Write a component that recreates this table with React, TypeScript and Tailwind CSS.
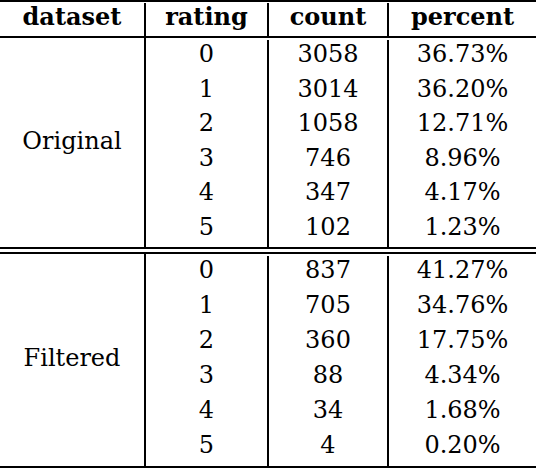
import React from "react";

const groups = [
  {
    name: "Original",
    rows: [
      ["0", "3058", "36.73%"],
      ["1", "3014", "36.20%"],
      ["2", "1058", "12.71%"],
      ["3", "746", "8.96%"],
      ["4", "347", "4.17%"],
      ["5", "102", "1.23%"],
    ],
  },
  {
    name: "Filtered",
    rows: [
      ["0", "837", "41.27%"],
      ["1", "705", "34.76%"],
      ["2", "360", "17.75%"],
      ["3", "88", "4.34%"],
      ["4", "34", "1.68%"],
      ["5", "4", "0.20%"],
    ],
  },
];

const VLine = () => <div className="w-[2px] self-stretch bg-black" />;

const Row = ({ cells }: { cells: string[] }) => (
  <div className="flex flex-1 leading-[28px]">
    <div className="w-[121px] text-center">{cells[0]}</div>
    <VLine />
    <div className="w-[118px] text-center">{cells[1]}</div>
    <VLine />
    <div className="flex-1 text-center">{cells[2]}</div>
  </div>
);

const Group = ({ name, rows, h }: { name: string; rows: string[][]; h: string }) => (
  <div className={`flex ${h}`}>
    <div className="w-[144px] flex items-center justify-center pb-[4px] leading-[28px]">{name}</div>
    <VLine />
    <div className="flex-1 flex flex-col pt-[2px]">
      {rows.map((r) => (
        <Row key={r[0]} cells={r} />
      ))}
    </div>
  </div>
);

export default function App() {
  return (
    <div className="w-[536px] h-[468px] bg-white text-black flex flex-col overflow-hidden font-['DejaVu_Serif',serif] text-[24px]">
      <div className="h-[2px] bg-black" />
      <div className="flex h-[34px] font-bold leading-[28px] pt-[1px]">
        <div className="w-[144px] text-center">dataset</div>
        <VLine />
        <div className="w-[121px] text-center">rating</div>
        <VLine />
        <div className="w-[118px] text-center">count</div>
        <VLine />
        <div className="flex-1 text-center">percent</div>
      </div>
      <div className="h-[2px] bg-black" />
      <Group name={groups[0].name} rows={groups[0].rows} h="h-[209px]" />
      <div className="h-[2px] bg-black" />
      <div className="h-[3px]" />
      <div className="h-[2px] bg-black" />
      <Group name={groups[1].name} rows={groups[1].rows} h="h-[212px]" />
      <div className="h-[2px] bg-black" />
    </div>
  );
}
